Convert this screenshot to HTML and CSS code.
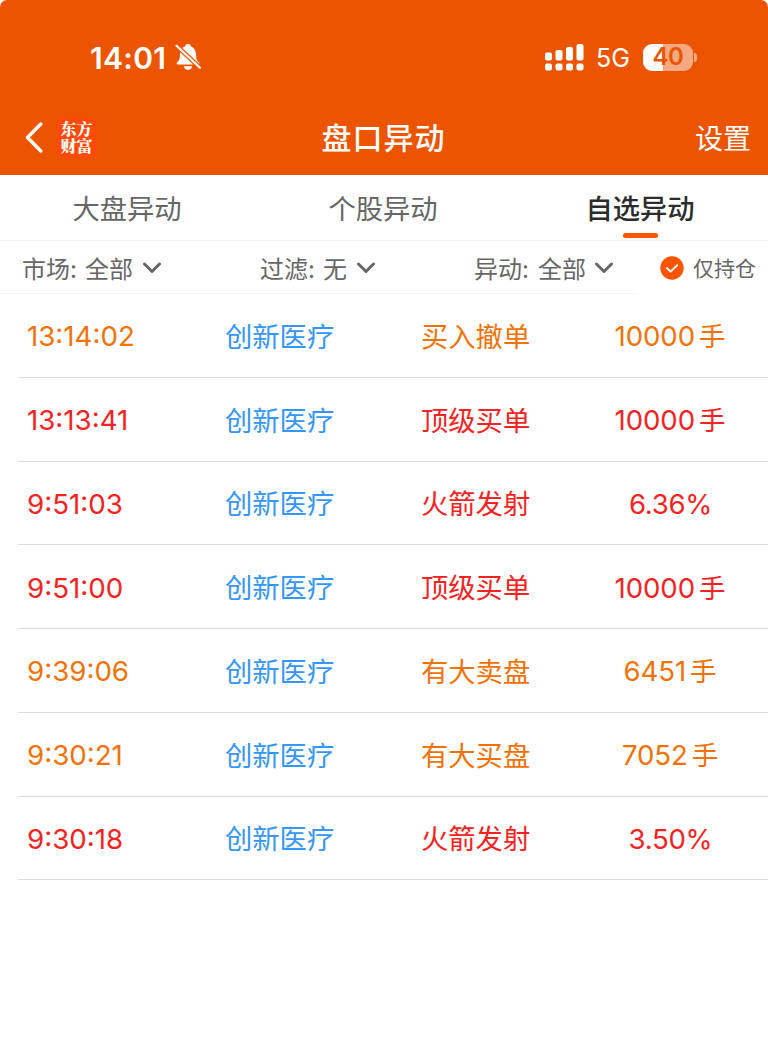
FILE: index.html
```html
<!DOCTYPE html>
<html lang="zh-CN">
<head>
<meta charset="utf-8">
<title>盘口异动</title>
<link rel="stylesheet" href="styles.css">
</head>
<body>
<header class="header">
  <div class="status">
    <span class="clock">14:01</span>
    <svg class="bell" width="28" height="28" viewBox="0 0 28 28">
      <path fill="#fff" d="M4 21.600C2.400 21.600 2.200 20.200 3.200 19.300C5.200 17.500 5.800 16.500 6 11.500C6.200 7 8 4.400 11 3.400C11.400 1.900 12.500.8 14 .8S16.600 1.900 17 3.400C20 4.400 21.800 7 22 11.500C22.200 16.500 22.800 17.500 24.800 19.300C25.800 20.200 25.600 21.600 24 21.600ZM9.700 23.200H18.300C17.800 25.600 16.200 26.800 14 26.800S10.200 25.600 9.700 23.200Z"/>
      <path stroke="#eb5502" stroke-width="4.600" d="M1.500 1.800L27 25.700"/>
      <path stroke="#fff" stroke-width="2.200" stroke-linecap="round" d="M2.500 2.800L26 24.800"/>
    </svg>
    <svg class="signal" width="39" height="27" viewBox="0 0 39 27" fill="#fff">
      <rect x="0" y="8.5" width="7" height="8" rx="2"/><rect x="10.5" y="6" width="7" height="10.5" rx="2"/><rect x="21" y="3" width="7" height="13.5" rx="2"/><rect x="31.5" y="0" width="7" height="16.500" rx="2"/>
      <rect x="0" y="19.500" width="7" height="7" rx="2"/><rect x="10.5" y="19.500" width="7" height="7" rx="2"/><rect x="21" y="19.500" width="7" height="7" rx="2"/><rect x="31.5" y="19.500" width="7" height="7" rx="2"/>
    </svg>
    <span class="network">5G</span>
    <span class="battery">40</span><i class="battery-tip"></i>
  </div>
  <nav class="titlebar">
    <div class="nav-left">
      <svg width="18" height="31" viewBox="0 0 18 31"><path d="M15.800 2L2.500 15.500L15.800 29" fill="none" stroke="#fff" stroke-width="3.400" stroke-linecap="round" stroke-linejoin="round"/></svg>
      <div class="logo">东方<br>财富</div>
    </div>
    <h1 class="title">盘口异动</h1>
    <span class="settings">设置</span>
  </nav>
</header>
<nav class="tabs">
  <span class="tab">大盘异动</span>
  <span class="tab">个股异动</span>
  <span class="tab active">自选异动</span>
</nav>
<div class="filters">
  <div class="filter"><span>市场:</span><span>全部</span><svg class="chev" viewBox="0 0 18 12"><path d="M1.500 2L9 9.500L16.500 2"/></svg></div>
  <div class="filter screen"><span>过滤:</span><span>无</span><svg class="chev" viewBox="0 0 18 12"><path d="M1.500 2L9 9.500L16.500 2"/></svg></div>
  <div class="filter change"><span>异动:</span><span>全部</span><svg class="chev" viewBox="0 0 18 12"><path d="M1.500 2L9 9.500L16.500 2"/></svg></div>
  <div class="holding"><svg width="24" height="24" viewBox="0 0 24 24"><circle cx="12" cy="12" r="11.700" fill="#ff5502"/><path d="M7 12.200L10.600 15.600L17.200 9.200" fill="none" stroke="#fff" stroke-width="1.900" stroke-linecap="round" stroke-linejoin="round"/></svg><span>仅持仓</span></div>
</div>
<main class="list">
  <div class="row orange"><span class="time">13:14:02</span><span class="stock">创新医疗</span><span class="event">买入撤单</span><span class="value">10000<b>手</b></span></div>
  <div class="row red"><span class="time">13:13:41</span><span class="stock">创新医疗</span><span class="event">顶级买单</span><span class="value">10000<b>手</b></span></div>
  <div class="row red"><span class="time">9:51:03</span><span class="stock">创新医疗</span><span class="event">火箭发射</span><span class="value percent">6.36%</span></div>
  <div class="row red"><span class="time">9:51:00</span><span class="stock">创新医疗</span><span class="event">顶级买单</span><span class="value">10000<b>手</b></span></div>
  <div class="row orange"><span class="time">9:39:06</span><span class="stock">创新医疗</span><span class="event">有大卖盘</span><span class="value">6451<b>手</b></span></div>
  <div class="row orange"><span class="time">9:30:21</span><span class="stock">创新医疗</span><span class="event">有大买盘</span><span class="value">7052<b>手</b></span></div>
  <div class="row red"><span class="time">9:30:18</span><span class="stock">创新医疗</span><span class="event">火箭发射</span><span class="value percent">3.50%</span></div>
</main>
</body>
</html>
```
FILE: styles.css
```css
* { box-sizing: border-box; }
body {
  margin: 0;
  background: #fff;
  color: #666;
  font-family: Inter, "Noto Sans CJK SC", sans-serif;
  white-space: nowrap;
}
.header {
  height: 175px;
  background: #eb5502;
  color: #fff;
  border-radius: 7px 7px 0 0;
}
.status {
  display: flex;
  align-items: center;
  height: 100px;
  padding: 14px 71px 0 90px;
}
.clock { width: 84px; padding-top: 1px; font-size: 30px; font-weight: 600; letter-spacing: 0.3px; }
.signal { margin-left: auto; }
.network { font-size: 25px; margin-left: 12px; width: 47px; padding-top: 2px; }
.battery {
  width: 50px;
  height: 27px;
  border-radius: 9px;
  background: linear-gradient(90deg, #fff 40%, #f5a981 40%);
  color: #eb5502;
  font-size: 24px;
  font-weight: 600;
  line-height: 26px;
  text-align: center;
  letter-spacing: -0.5px;
}
.battery-tip {
  width: 3px;
  height: 9px;
  margin-left: 1px;
  border-radius: 0 4px 4px 0;
  background: #f5a981;
}
.titlebar {
  display: grid;
  grid-template-columns: 1fr auto 1fr;
  align-items: center;
  height: 75px;
  padding: 0 17px 0 25px;
}
.nav-left { display: flex; align-items: center; gap: 13px; }
.logo {
  width: 41px;
  height: 41px;
  padding-top: 3px;
  border-radius: 8px;
  background: #ff4a08;
  font: 900 16px/17px "Noto Serif CJK SC", "Noto Sans CJK SC", serif;
  text-align: center;
}
.title { margin: 0 9px 3px 0; font-size: 30px; font-weight: 500; letter-spacing: 1px; }
.settings { padding-bottom: 2px; font-size: 28px; text-align: right; }
.tabs {
  display: grid;
  grid-template-columns: repeat(3, 1fr);
  height: 66px;
  border-bottom: 1px solid #f1f1f1;
}
.tab {
  display: flex;
  flex-direction: column;
  align-items: center;
  height: 65px;
  padding-right: 2px;
  font-size: 27.3px;
  line-height: 69px;
}
.active { padding-right: 0; color: #2c2c2c; font-weight: 500; }
.active::after {
  content: "";
  flex: none;
  width: 35px;
  height: 5px;
  margin-top: -11px;
  border-radius: 3px;
  background: #ff5502;
}
.filters {
  display: grid;
  grid-template-columns: 238px 214px 186px 1fr;
  height: 53px;
  background: linear-gradient(#f4f4f4, #f4f4f4) 0 100% / 638px 1px no-repeat;
}
.filter { display: flex; align-items: center; gap: 8px; padding-left: 22px; font-size: 24px; }
.change { gap: 9px; }
.chev { width: 18px; height: 12px; margin-left: 2px; }
.change .chev { margin-left: 0; }
.chev path { fill: none; stroke: #666; stroke-width: 3; stroke-linecap: round; stroke-linejoin: round; }
.holding { display: flex; align-items: center; gap: 9px; padding-left: 22px; font-size: 21px; }
.holding span { padding-bottom: 2px; }
.list { padding-left: 18px; }
.row {
  display: grid;
  grid-template-columns: 207px 196px 151px 196px;
  align-items: center;
  height: 83.75px;
  border-bottom: 1px solid #dcdcdc;
  font-size: 27.3px;
}
.orange { color: #f07205; }
.red { color: #f52222; }
.time { padding: 2px 0 0 9px; font-size: 27.7px; }
.stock { color: #3596f5; }
.stock, .event { padding-bottom: 1px; }
.value { padding-bottom: 1px; font-size: 27.6px; text-align: center; letter-spacing: -0.1px; }
.percent { padding: 2px 0 0 1px; letter-spacing: -0.3px; }
.value b { margin-left: 4px; font-size: 26.500px; font-weight: 400; }
```
